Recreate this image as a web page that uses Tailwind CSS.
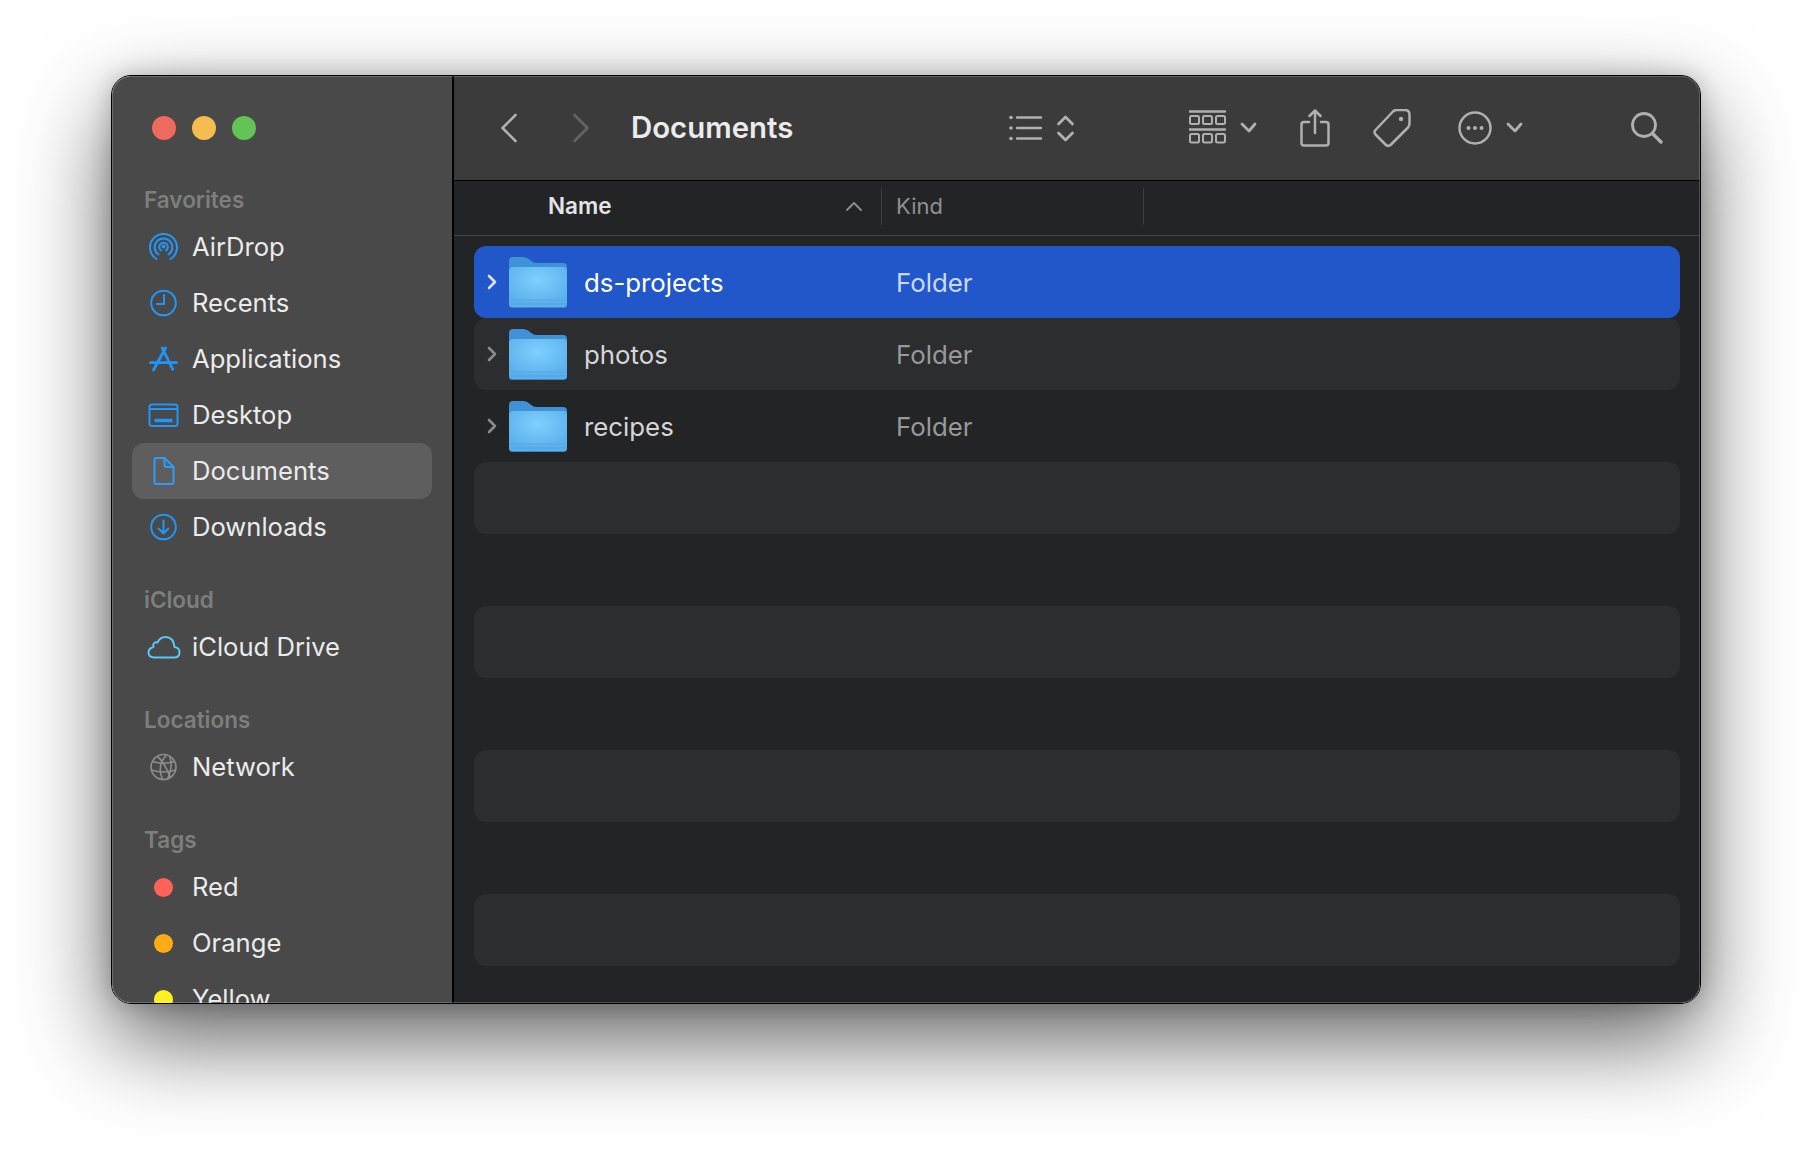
<!DOCTYPE html>
<html lang="en">
<head>
<meta charset="UTF-8">
<title>Documents</title>
<script src="https://cdn.jsdelivr.net/npm/@tailwindcss/browser@4"></script>
</head>
<body class="bg-white">
<svg width="0" height="0" class="absolute">
  <defs>
    <radialGradient id="folderFront" cx="50%" cy="32%" r="65%">
      <stop offset="0%" stop-color="#7fd0fd"/>
      <stop offset="100%" stop-color="#5ab0ec"/>
    </radialGradient>
    <symbol id="folder" viewBox="0 0 58 51">
      <path d="M0 4Q0 0 4 0H14Q17 0 19 1.500L23 4.500Q25 6 28 6H54Q58 6 58 10V20H0Z" fill="#3f92d6"/>
      <rect y="10" width="58" height="41" rx="3.500" fill="#3f86c4"/>
      <rect y="10" width="58" height="40" rx="3.500" fill="url(#folderFront)"/>
      <path d="M0.500 43H57.500" stroke="#55a6e3" stroke-width="1"/>
      <path d="M0.500 45.500H57.500" stroke="#5fb0ea" stroke-width="1"/>
      <path d="M0.500 47H57.500" stroke="#52a3e0" stroke-width="1"/>
    </symbol>
  </defs>
</svg>
<div class="w-[1812px] h-[1152px] pl-[111px] pt-[75px] overflow-hidden font-['Inter',sans-serif]">
  <div class="relative flex w-[1590px] h-[929px] rounded-[20px] overflow-hidden border border-black shadow-[0_36px_90px_rgba(0,0,0,0.62),0_0_24px_rgba(0,0,0,0.22)] after:absolute after:inset-0 after:rounded-[19px] after:shadow-[inset_0_0_0_1px_rgba(255,255,255,0.2)] after:pointer-events-none">

    <!-- sidebar -->
    <aside class="w-[340px] h-full shrink-0 bg-[#484948] pt-10 overflow-hidden">
      <div class="flex gap-4 pl-10">
        <span class="size-6 rounded-full bg-[#ee6a5f]"></span>
        <span class="size-6 rounded-full bg-[#f5bd4f]"></span>
        <span class="size-6 rounded-full bg-[#61c454]"></span>
      </div>

      <div class="mt-[41px] h-[38px] pl-8 flex items-center text-[22.500px] font-semibold text-[#7d7e7d]">Favorites</div>
      <ul class="mx-5 text-[25.600px] text-[#ebebeb]">
        <li class="h-14 flex items-center">
          <svg class="w-[52px] pl-[11px] shrink-0" height="30" viewBox="0 0 30 30" fill="none" stroke="#2196f8" stroke-width="2" stroke-linecap="round"><path d="M8 27A13.500 13.500 0 1 1 22 27"/><path d="M10 22.500A8.800 8.800 0 1 1 20 22.500"/><path d="M12.500 18.500A4.300 4.300 0 1 1 17.500 18.500"/><circle cx="15" cy="14.500" r="1" fill="#2196f8"/></svg>
          <span class="ml-2">AirDrop</span>
        </li>
        <li class="h-14 flex items-center">
          <svg class="w-[52px] pl-[11px] shrink-0" height="30" viewBox="0 0 30 30" fill="none" stroke="#2196f8" stroke-width="2" stroke-linecap="round" stroke-linejoin="round"><circle cx="15" cy="15" r="12.300"/><path d="M15.500 7V16H8.500"/></svg>
          <span class="ml-2">Recents</span>
        </li>
        <li class="h-14 flex items-center">
          <svg class="w-[52px] pl-[11px] shrink-0" height="30" viewBox="0 0 30 30" fill="none" stroke="#2196f8" stroke-width="2.800" stroke-linecap="round"><path d="M13.700 4L24.300 25.300"/><path d="M17 4L5 26"/><path d="M2 18.700H28"/></svg>
          <span class="ml-2">Applications</span>
        </li>
        <li class="h-14 flex items-center">
          <svg class="w-[52px] pl-[11px] shrink-0" height="30" viewBox="0 0 30 30" fill="none" stroke="#2196f8" stroke-width="2"><rect x="1" y="4.500" width="28" height="21.500" rx="2.500"/><path d="M1 9H29"/><path d="M6 20.500H24" stroke-width="3.500"/></svg>
          <span class="ml-2">Desktop</span>
        </li>
        <li class="h-14 flex items-center rounded-xl bg-[#5e5e5e]">
          <svg class="w-[52px] pl-[11px] shrink-0" height="30" viewBox="0 0 30 30" fill="none" stroke="#2d9bf8" stroke-width="2" stroke-linejoin="round"><path d="M6 4Q6 2 8 2H16L25 11V26Q25 28 23 28H8Q6 28 6 26Z"/><path d="M16 2V9Q16 11 18 11H25"/></svg>
          <span class="ml-2">Documents</span>
        </li>
        <li class="h-14 flex items-center">
          <svg class="w-[52px] pl-[11px] shrink-0" height="30" viewBox="0 0 30 30" fill="none" stroke="#2196f8" stroke-width="2" stroke-linecap="round" stroke-linejoin="round"><circle cx="15" cy="15" r="12.300"/><path d="M15 8.500V21M10 16.500L15 21.500L20 16.500"/></svg>
          <span class="ml-2">Downloads</span>
        </li>
      </ul>

      <div class="mt-[26px] h-[38px] pl-8 flex items-center text-[22.500px] font-semibold text-[#7d7e7d]">iCloud</div>
      <ul class="mx-5 text-[25.600px] text-[#ebebeb]">
        <li class="h-14 flex items-center">
          <svg class="w-[52px] pl-[12px] shrink-0" height="30" viewBox="0 0 34 30" fill="none" stroke="#5ac8fa" stroke-width="2" stroke-linejoin="round"><path d="M8 25.500H27Q32.500 25.500 32.500 20.500Q32.500 15.500 27.500 15Q26.500 5 18.500 5Q13 5 10.500 10.500Q8 9.500 6.500 12Q6 13.500 6.500 15Q1.500 16.500 1.500 20.500Q1.500 25.500 8 25.500Z"/></svg>
          <span class="ml-2">iCloud Drive</span>
        </li>
      </ul>

      <div class="mt-[26px] h-[38px] pl-8 flex items-center text-[22.500px] font-semibold text-[#7d7e7d]">Locations</div>
      <ul class="mx-5 text-[25.600px] text-[#ebebeb]">
        <li class="h-14 flex items-center">
          <svg class="w-[52px] pl-[11px] shrink-0" height="30" viewBox="0 0 30 30" fill="none" stroke="#8c8d8c" stroke-width="1.600"><circle cx="15" cy="15" r="12.500"/><path d="M4 9.500Q15 13 26 9.500"/><path d="M3 18Q15 22 27 18"/><path d="M18 2.800Q8 14 14 27.300"/><path d="M9 4.500Q16 10 22 26"/><path d="M21 4Q25 14 19 27"/></svg>
          <span class="ml-2">Network</span>
        </li>
      </ul>

      <div class="mt-[26px] h-[38px] pl-8 flex items-center text-[22.500px] font-semibold text-[#7d7e7d]">Tags</div>
      <ul class="mx-5 text-[25.600px] text-[#ebebeb]">
        <li class="h-14 flex items-center"><span class="ml-[22px] mr-[19px] size-[19px] rounded-full bg-[#ff6259]"></span><span>Red</span></li>
        <li class="h-14 flex items-center"><span class="ml-[22px] mr-[19px] size-[19px] rounded-full bg-[#ffac14]"></span><span>Orange</span></li>
        <li class="h-14 flex items-center"><span class="ml-[22px] mr-[19px] size-[19px] rounded-full bg-[#fff01f]"></span><span>Yellow</span></li>
      </ul>
    </aside>

    <!-- main -->
    <main class="flex-1 min-w-0 h-full flex flex-col bg-[#232426] border-l-2 border-black">
      <header class="h-[105px] shrink-0 flex items-center bg-[#3a3b3a] border-b border-black">
        <svg class="ml-[46px] shrink-0" width="18" height="30" viewBox="0 0 18 30" fill="none" stroke="#b0b0b0" stroke-width="2.600" stroke-linecap="round" stroke-linejoin="round"><path d="M15.500 2L2.500 15L15.500 28"/></svg>
        <svg class="ml-[54px] shrink-0" width="18" height="30" viewBox="0 0 18 30" fill="none" stroke="#626362" stroke-width="2.600" stroke-linecap="round" stroke-linejoin="round"><path d="M2.500 2L15.500 15L2.500 28"/></svg>
        <h1 class="ml-[41px] w-[378px] shrink-0 text-[29.400px] font-semibold text-[#ebebeb]">Documents</h1>
        <svg class="shrink-0" width="66" height="30" viewBox="0 0 66 30" fill="none" stroke="#b0b0b0" stroke-width="2.400" stroke-linecap="round" stroke-linejoin="round"><circle cx="2" cy="4.500" r="1.800" fill="#b0b0b0" stroke="none"/><circle cx="2" cy="15" r="1.800" fill="#b0b0b0" stroke="none"/><circle cx="2" cy="25.500" r="1.800" fill="#b0b0b0" stroke="none"/><path d="M8 4.500H32M8 15H32M8 25.500H32"/><path d="M49.500 11L56.500 4L63.500 11M49.500 20L56.500 27L63.500 20" stroke-width="2.800"/></svg>
        <svg class="ml-[114px] shrink-0" width="68" height="36" viewBox="0 0 68 36" fill="none" stroke="#b0b0b0" stroke-width="2" stroke-linecap="round" stroke-linejoin="round"><path d="M0.500 1.500H36M0.500 19.500H36" stroke-width="2.400"/><rect x="1" y="6" width="9" height="8" rx="1.500"/><rect x="14" y="6" width="9" height="8" rx="1.500"/><rect x="27" y="6" width="9" height="8" rx="1.500"/><rect x="1" y="24" width="9" height="8.500" rx="1.500"/><rect x="14" y="24" width="9" height="8.500" rx="1.500"/><rect x="27" y="24" width="9" height="8.500" rx="1.500"/><path d="M53 14L60 21L66 14" stroke-width="2.800"/></svg>
        <svg class="ml-[43px] shrink-0" width="30" height="38" viewBox="0 0 30 38" fill="none" stroke="#b0b0b0" stroke-width="2.500" stroke-linecap="round" stroke-linejoin="round"><path d="M9 13H4Q1.500 13 1.500 15.500V34Q1.500 36.500 4 36.500H26Q28.500 36.500 28.500 34V15.500Q28.500 13 26 13H21"/><path d="M15 24V2M9.500 7L15 1.500L20.500 7"/></svg>
        <svg class="ml-[43px] shrink-0" width="38" height="38" viewBox="0 0 38 38" fill="none" stroke="#b0b0b0" stroke-width="2.500" stroke-linejoin="round"><path d="M2.500 21L20 2.500Q21.500 1 24 1H32Q36.500 1 36.500 6V14Q36.500 17 35 18.500L17.500 36Q15 38 12.500 35.500L2.500 25.500Q0.500 23 2.500 21Z"/><circle cx="28" cy="10" r="2.200" fill="#b0b0b0" stroke="none"/></svg>
        <svg class="ml-[47px] shrink-0" width="66" height="34" viewBox="0 0 66 34" fill="none" stroke="#b0b0b0" stroke-width="2.500" stroke-linecap="round" stroke-linejoin="round"><ellipse cx="17" cy="17" rx="15.500" ry="15.500"/><circle cx="10.500" cy="17" r="2" fill="#b0b0b0" stroke="none"/><circle cx="17" cy="17" r="2" fill="#b0b0b0" stroke="none"/><circle cx="23.500" cy="17" r="2" fill="#b0b0b0" stroke="none"/><path d="M50 13L57 20L63 13" stroke-width="2.800"/></svg>
        <svg class="ml-[107px] shrink-0" width="32" height="32" viewBox="0 0 32 32" fill="none" stroke="#b0b0b0" stroke-width="2.800" stroke-linecap="round"><circle cx="13" cy="13" r="11.500"/><path d="M21.500 21.500L30 30" stroke-width="3.400"/></svg>
      </header>

      <div class="h-[55px] shrink-0 flex items-center border-b border-[#444546] pb-1">
        <span class="ml-[94px] w-[333px] shrink-0 text-[22.500px] font-semibold text-[#e4e4e4] flex items-center justify-between pr-[18px]">Name
          <svg width="18" height="12" viewBox="0 0 18 12" fill="none" stroke="#8f8f8f" stroke-width="1.800" stroke-linecap="round" stroke-linejoin="round"><path d="M2 10L9 3L16 10"/></svg>
        </span>
        <span class="w-px h-[37px] bg-[#3d3e40] shrink-0"></span>
        <span class="w-[261px] shrink-0 pl-[14px] text-[22px] text-[#8f9092]">Kind</span>
        <span class="w-px h-[37px] bg-[#3d3e40] shrink-0"></span>
      </div>

      <div class="mt-[10px] mx-5">
        <div class="h-[72px] flex items-center rounded-xl bg-[#2257c9] text-[25.800px] pl-[13px]">
          <svg class="shrink-0" width="10" height="16" viewBox="0 0 10 16" fill="none" stroke="#d8e2f6" stroke-width="2.600" stroke-linecap="round" stroke-linejoin="round"><path d="M2 2L8 8L2 14"/></svg>
          <svg class="ml-3 shrink-0" width="58" height="51"><use href="#folder"/></svg>
          <span class="ml-[17px] w-[312px] shrink-0 mt-[2px] text-white">ds-projects</span>
          <span class="mt-[2px] text-[#ccd8f2]">Folder</span>
        </div>
        <div class="h-[72px] flex items-center rounded-xl bg-[#2c2d2f] text-[25.800px] pl-[13px]">
          <svg class="shrink-0" width="10" height="16" viewBox="0 0 10 16" fill="none" stroke="#8a8b8c" stroke-width="2.600" stroke-linecap="round" stroke-linejoin="round"><path d="M2 2L8 8L2 14"/></svg>
          <svg class="ml-3 shrink-0" width="58" height="51"><use href="#folder"/></svg>
          <span class="ml-[17px] w-[312px] shrink-0 mt-[2px] text-[#d6d6d6]">photos</span>
          <span class="mt-[2px] text-[#98999a]">Folder</span>
        </div>
        <div class="h-[72px] flex items-center rounded-xl text-[25.800px] pl-[13px]">
          <svg class="shrink-0" width="10" height="16" viewBox="0 0 10 16" fill="none" stroke="#8a8b8c" stroke-width="2.600" stroke-linecap="round" stroke-linejoin="round"><path d="M2 2L8 8L2 14"/></svg>
          <svg class="ml-3 shrink-0" width="58" height="51"><use href="#folder"/></svg>
          <span class="ml-[17px] w-[312px] shrink-0 mt-[2px] text-[#d6d6d6]">recipes</span>
          <span class="mt-[2px] text-[#98999a]">Folder</span>
        </div>
        <div class="h-[72px] rounded-xl bg-[#2c2d2f]"></div>
        <div class="h-[72px]"></div>
        <div class="h-[72px] rounded-xl bg-[#2c2d2f]"></div>
        <div class="h-[72px]"></div>
        <div class="h-[72px] rounded-xl bg-[#2c2d2f]"></div>
        <div class="h-[72px]"></div>
        <div class="h-[72px] rounded-xl bg-[#2c2d2f]"></div>
      </div>
    </main>
  </div>
</div>
</body>
</html>
